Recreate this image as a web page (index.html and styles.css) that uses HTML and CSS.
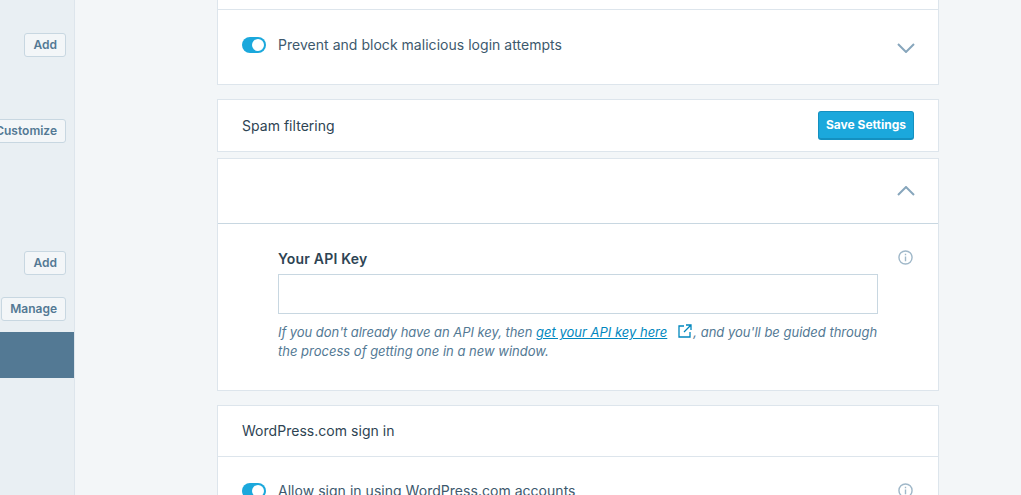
FILE: index.html
```html
<!DOCTYPE html>
<html lang="en">
<head>
<meta charset="utf-8">
<title>Jetpack settings</title>
<link rel="stylesheet" href="styles.css">
</head>
<body>
<div class="page">
  <aside class="sidebar">
    <button class="btn btn-add-1">Add</button>
    <button class="btn btn-customize">Customize</button>
    <button class="btn btn-add-2">Add</button>
    <button class="btn btn-manage">Manage</button>
    <div class="active-row"></div>
  </aside>
  <main class="main">
    <section class="card card-top">
      <div class="top-strip"></div>
      <div class="row row-toggle">
        <span class="toggle"><span class="knob"></span></span>
        <span class="row-label">Prevent and block malicious login attempts</span>
        <svg class="chevron" width="18" height="10" viewBox="0 0 18 10"><path d="M1 1l8 8 8-8" fill="none" stroke="#87a6bc" stroke-width="2"/></svg>
      </div>
    </section>
    <section class="card card-spam">
      <span class="header-title">Spam filtering</span>
      <button class="btn-primary">Save Settings</button>
    </section>
    <section class="card card-key">
      <div class="key-head">
        <svg class="chevron" width="18" height="10" viewBox="0 0 18 10"><path d="M1 9l8-8 8 8" fill="none" stroke="#87a6bc" stroke-width="2"/></svg>
      </div>
      <div class="key-body">
        <div class="key-field">
          <label class="key-label" for="api">Your API Key</label>
          <input class="key-input" id="api" type="text">
          <p class="key-help"><span class="key-lead">If you don't already have an API key, then </span><a href="#">get your API key here</a><svg class="ext" width="14" height="14" viewBox="0 0 14 14"><path d="M6 2H1v11h11V8M8 1h5v5M13 1L6 8" fill="none" stroke="#0087be" stroke-width="1.3"/></svg>, and you'll be guided through the process of getting one in a new window.</p>
        </div>
        <svg class="info" width="15" height="15" viewBox="0 0 16 16"><circle cx="8" cy="8" r="7" fill="none" stroke="#a0b8c9" stroke-width="1.5"/><path d="M8 7v5M8 4v1.6" fill="none" stroke="#a0b8c9" stroke-width="1.5"/></svg>
      </div>
    </section>
    <section class="card card-sign">
      <div class="sign-head"><span class="header-title">WordPress.com sign in</span></div>
      <div class="row-sign">
        <span class="toggle"><span class="knob"></span></span>
        <span class="row-label">Allow sign in using WordPress.com accounts</span>
        <svg class="info" width="15" height="15" viewBox="0 0 16 16"><circle cx="8" cy="8" r="7" fill="none" stroke="#a0b8c9" stroke-width="1.5"/><path d="M8 7v5M8 4v1.6" fill="none" stroke="#a0b8c9" stroke-width="1.5"/></svg>
      </div>
    </section>
  </main>
</div>
</body>
</html>
```
FILE: styles.css
```css
html, body {
  margin: 0;
  padding: 0;
  height: 100%;
  overflow: hidden;
  background: #f3f6f8;
}
body, button, input {
  font-family: Inter, "Noto Sans", sans-serif;
}
.page {
  display: flex;
  height: 495px;
  overflow: hidden;
}
.sidebar {
  width: 74px;
  flex: none;
  box-sizing: content-box;
  background: #e9eff3;
  border-right: 1px solid #dde5ec;
  display: flex;
  flex-direction: column;
  align-items: flex-end;
  overflow: hidden;
}
.btn {
  flex: none;
  height: 24px;
  margin-right: 8px;
  padding: 0 8px;
  box-sizing: border-box;
  background: #f3f6f8;
  border: 1px solid #c8d7e1;
  border-radius: 3px;
  color: #537994;
  font-size: 12px;
  font-weight: 600;
  line-height: 20px;
  white-space: nowrap;
}
.btn-add-1 { margin-top: 33px; }
.btn-customize { margin-top: 62px; }
.btn-add-2 { margin-top: 108px; }
.btn-manage { margin-top: 22px; }
.active-row {
  flex: none;
  align-self: stretch;
  height: 46px;
  margin-top: 11px;
  background: #537994;
}
.main {
  width: 722px;
  margin-left: 142px;
  flex: none;
  display: flex;
  flex-direction: column;
}
.card {
  box-sizing: border-box;
  background: #fff;
  border: 1px solid #dde5ec;
  flex: none;
}
.card-top {
  border-top: 0;
  height: 85px;
}
.top-strip {
  height: 9px;
  border-bottom: 1px solid #dde5ec;
}
.row {
  display: flex;
  align-items: center;
}
.row-toggle {
  height: 70px;
  padding: 0 23px 0 24px;
}
.toggle {
  flex: none;
  box-sizing: border-box;
  width: 24px;
  height: 16px;
  border-radius: 8px;
  background: #1ba8dc;
  display: flex;
  justify-content: flex-end;
  align-items: center;
  padding-right: 2px;
}
.knob {
  width: 12px;
  height: 12px;
  border-radius: 50%;
  background: #fff;
}
.row-label {
  margin-left: 12px;
  font-size: 14px;
  color: #3d596d;
  letter-spacing: 0.03px;
  white-space: nowrap;
}
.row-toggle .row-label { margin-bottom: 2px; }
.chevron {
  display: block;
  margin-left: auto;
}
.row-toggle .chevron { margin-top: 6px; }
.card-spam {
  margin-top: 14px;
  height: 53px;
  padding: 0 24px;
  display: flex;
  align-items: center;
  justify-content: space-between;
}
.header-title {
  font-size: 14px;
  color: #2e4453;
  letter-spacing: 0.03px;
}
.btn-primary {
  width: 96px;
  height: 29px;
  box-sizing: border-box;
  padding: 0 0 1px;
  background: #1ba8dc;
  border: 1px solid #1490c0;
  border-bottom-width: 2px;
  border-radius: 3px;
  color: #fff;
  font-size: 12px;
  font-weight: 700;
}
.card-key {
  margin-top: 6px;
  height: 233px;
}
.key-head {
  height: 64px;
  box-sizing: content-box;
  border-bottom: 1px solid #c8d7e1;
  padding: 0 23px 0 24px;
  display: flex;
  align-items: center;
}
.key-body {
  display: flex;
  justify-content: space-between;
  padding: 25px 25px 0 60px;
}
.key-field {
  width: 600px;
}
.key-label {
  display: block;
  font-size: 14px;
  font-weight: 600;
  line-height: 20px;
  color: #2e4453;
  letter-spacing: 0.2px;
}
.key-input {
  display: block;
  width: 100%;
  height: 40px;
  margin-top: 5px;
  box-sizing: border-box;
  border: 1px solid #c8d7e1;
  background: #fff;
  padding: 0 8px;
}
.key-help {
  margin: 9px 0 0;
  font-size: 13px;
  line-height: 19px;
  font-style: italic;
  color: #537994;
}
.key-lead {
  letter-spacing: -0.05px;
}
.key-help a {
  color: #0087be;
}
.ext {
  margin: 0 1px 0 11px;
  vertical-align: -1px;
}
.info {
  display: block;
  flex: none;
}
.key-body .info { margin-top: 1px; }
.card-sign {
  margin-top: 14px;
  height: 120px;
}
.sign-head {
  height: 48px;
  padding: 0 24px 2px;
  display: flex;
  align-items: center;
  border-bottom: 1px solid #dde5ec;
}
.row-sign {
  display: flex;
  align-items: flex-start;
  padding: 26px 25px 0 24px;
}
.row-sign .row-label { line-height: 16px; }
.row-sign .info { margin-left: auto; }
```
